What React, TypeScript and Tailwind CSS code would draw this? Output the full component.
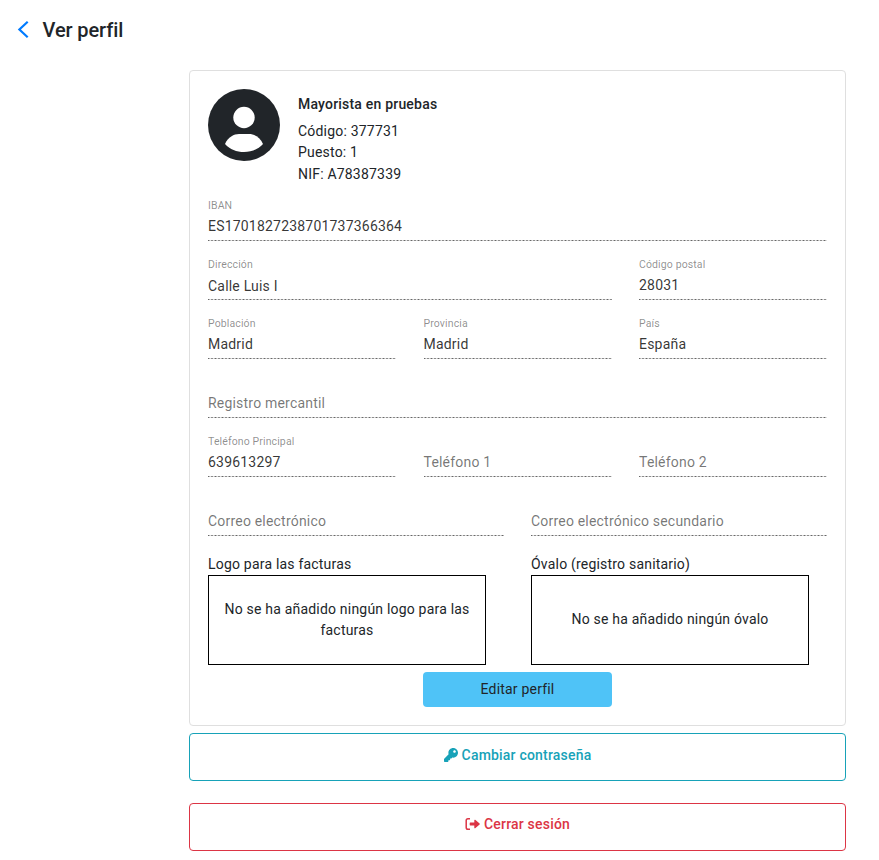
import { ReactNode } from "react";
import { FaKey } from "react-icons/fa";

function SignOutIcon() {
  return (
    <svg className="h-[14px] w-[15px]" viewBox="0 0 15 14">
      <path d="M5 1.8H3A1.8 1.8 0 0 0 1.2 3.6v6.8A1.8 1.8 0 0 0 3 12.2h2" fill="none" stroke="currentColor" strokeWidth="1.5" />
      <path d="M5.2 5.5h4.1V3.2c0-.5.5-.7.9-.4l4.4 3.8c.3.2.3.6 0 .8l-4.4 3.8c-.4.3-.9.1-.9-.4V8.5H5.2c-.3 0-.5-.2-.5-.5V6c0-.3.2-.5.5-.5Z" fill="currentColor" />
    </svg>
  );
}

function Field({ label, value, lower = false, className = "" }: { label: string; value?: string; lower?: boolean; className?: string }) {
  return (
    <div className={`flex h-[59px] flex-col ${className}`}>
      <div className="mt-[18px] h-3 text-[10.5px] leading-3 tracking-[0.12px] text-black/45">{value ? label : ""}</div>
      <div className={`mt-1 h-5 ${lower ? "leading-[22px]" : "leading-5"} ${value ? "text-black/80" : "text-black/55"}`}>
        {value ?? label}
      </div>
      <div className="mt-1 h-px bg-[linear-gradient(to_right,rgba(0,0,0,0.6)_0_1px,rgba(0,0,0,0.3)_1px_2px,rgba(0,0,0,0.12)_2px_3px,rgba(0,0,0,0.45)_3px_5px,rgba(0,0,0,0.12)_5px_6px,rgba(0,0,0,0.3)_6px_7px)] bg-[length:7px_100%] bg-repeat-x" />
    </div>
  );
}

function ImageSlot({ title, children }: { title: string; children: ReactNode }) {
  return (
    <div className="w-[278px]">
      <div className="h-[21px] leading-[21px]">{title}</div>
      <div className="flex h-[90px] items-center justify-center border border-black px-3 pb-px text-center leading-[21px]">
        {children}
      </div>
    </div>
  );
}

export default function App() {
  return (
    <div className="h-[860px] w-full overflow-hidden bg-white font-[Roboto,sans-serif] text-sm tracking-[0.2px] text-[#212529]">
      <header className="flex h-[70px] items-start pl-[17px] pt-[15px]">
        <svg className="mt-[6px] h-[17px] w-[12px]" viewBox="0 0 12 17" fill="none" stroke="#007bff" strokeWidth="2.2">
          <path d="M10.7 0.8 2.4 8.5l8.3 7.7" />
        </svg>
        <h1 className="ml-[13.5px] text-xl leading-[30px] font-medium tracking-[-0.1px]">Ver perfil</h1>
      </header>

      <main className="ml-[189px] w-[657px]">
        <section className="h-[656px] rounded-[4px] border border-[#dfdfdf] px-[18px] pt-[18px]">
          <div className="flex h-[93px]">
            <svg className="h-[72px] w-[72px]" viewBox="0 0 72 72">
              <circle cx="36" cy="36" r="36" fill="#212529" />
              <circle cx="36" cy="28.5" r="10.7" fill="#fff" />
              <path d="M17 55C20 48 26 45 31 45H41C46 45 52 48 55 55C50 60.5 43.5 63 36 63S22 60.5 17 55Z" fill="#fff" />
            </svg>
            <div className="ml-[18px] pt-[4px]">
              <div className="h-[28px] leading-[22px] font-medium">Mayorista en pruebas</div>
              <div>
                <div className="leading-[21px]">Código: 377731</div>
                <div className="leading-[21px]">Puesto: 1</div>
                <div className="leading-[23px]">NIF: A78387339</div>
              </div>
            </div>
          </div>

          <Field label="IBAN" value="ES1701827238701737366364" />
          <div className="flex gap-[27px]">
            <Field label="Dirección" value="Calle Luis I" lower className="w-[404px]" />
            <Field label="Código postal" value="28031" className="w-[188px]" />
          </div>
          <div className="flex justify-between">
            <Field label="Población" value="Madrid" className="w-[188px]" />
            <Field label="Provincia" value="Madrid" className="w-[188px]" />
            <Field label="País" value="España" className="w-[188px]" />
          </div>
          <Field label="Registro mercantil" />
          <div className="flex justify-between">
            <Field label="Teléfono Principal" value="639613297" className="w-[188px]" />
            <Field label="Teléfono 1" className="w-[188px]" />
            <Field label="Teléfono 2" className="w-[188px]" />
          </div>
          <div className="flex justify-between">
            <Field label="Correo electrónico" className="w-[296px]" />
            <Field label="Correo electrónico secundario" className="w-[296px]" />
          </div>

          <div className="mt-[18px] flex gap-[45px]">
            <ImageSlot title="Logo para las facturas">No se ha añadido ningún logo para las facturas</ImageSlot>
            <ImageSlot title="Óvalo (registro sanitario)">No se ha añadido ningún óvalo</ImageSlot>
          </div>

          <button className="mx-auto mt-[7px] block h-[35px] w-[189px] rounded-[4px] bg-[#4fc3f7] pb-px">
            Editar perfil
          </button>
        </section>

        <button className="mt-[7px] flex h-12 w-full items-center justify-center gap-1 rounded-[4px] border border-[#17a2b8] pb-[4px] font-medium text-[#17a2b8]">
          <FaKey className="h-[14px] w-[14px]" />
          Cambiar contraseña
        </button>
        <button className="mt-[22px] flex h-12 w-full items-center justify-center gap-1 rounded-[4px] border border-[#dc3545] pb-[6px] font-medium text-[#dc3545]">
          <SignOutIcon />
          Cerrar sesión
        </button>
      </main>
    </div>
  );
}
